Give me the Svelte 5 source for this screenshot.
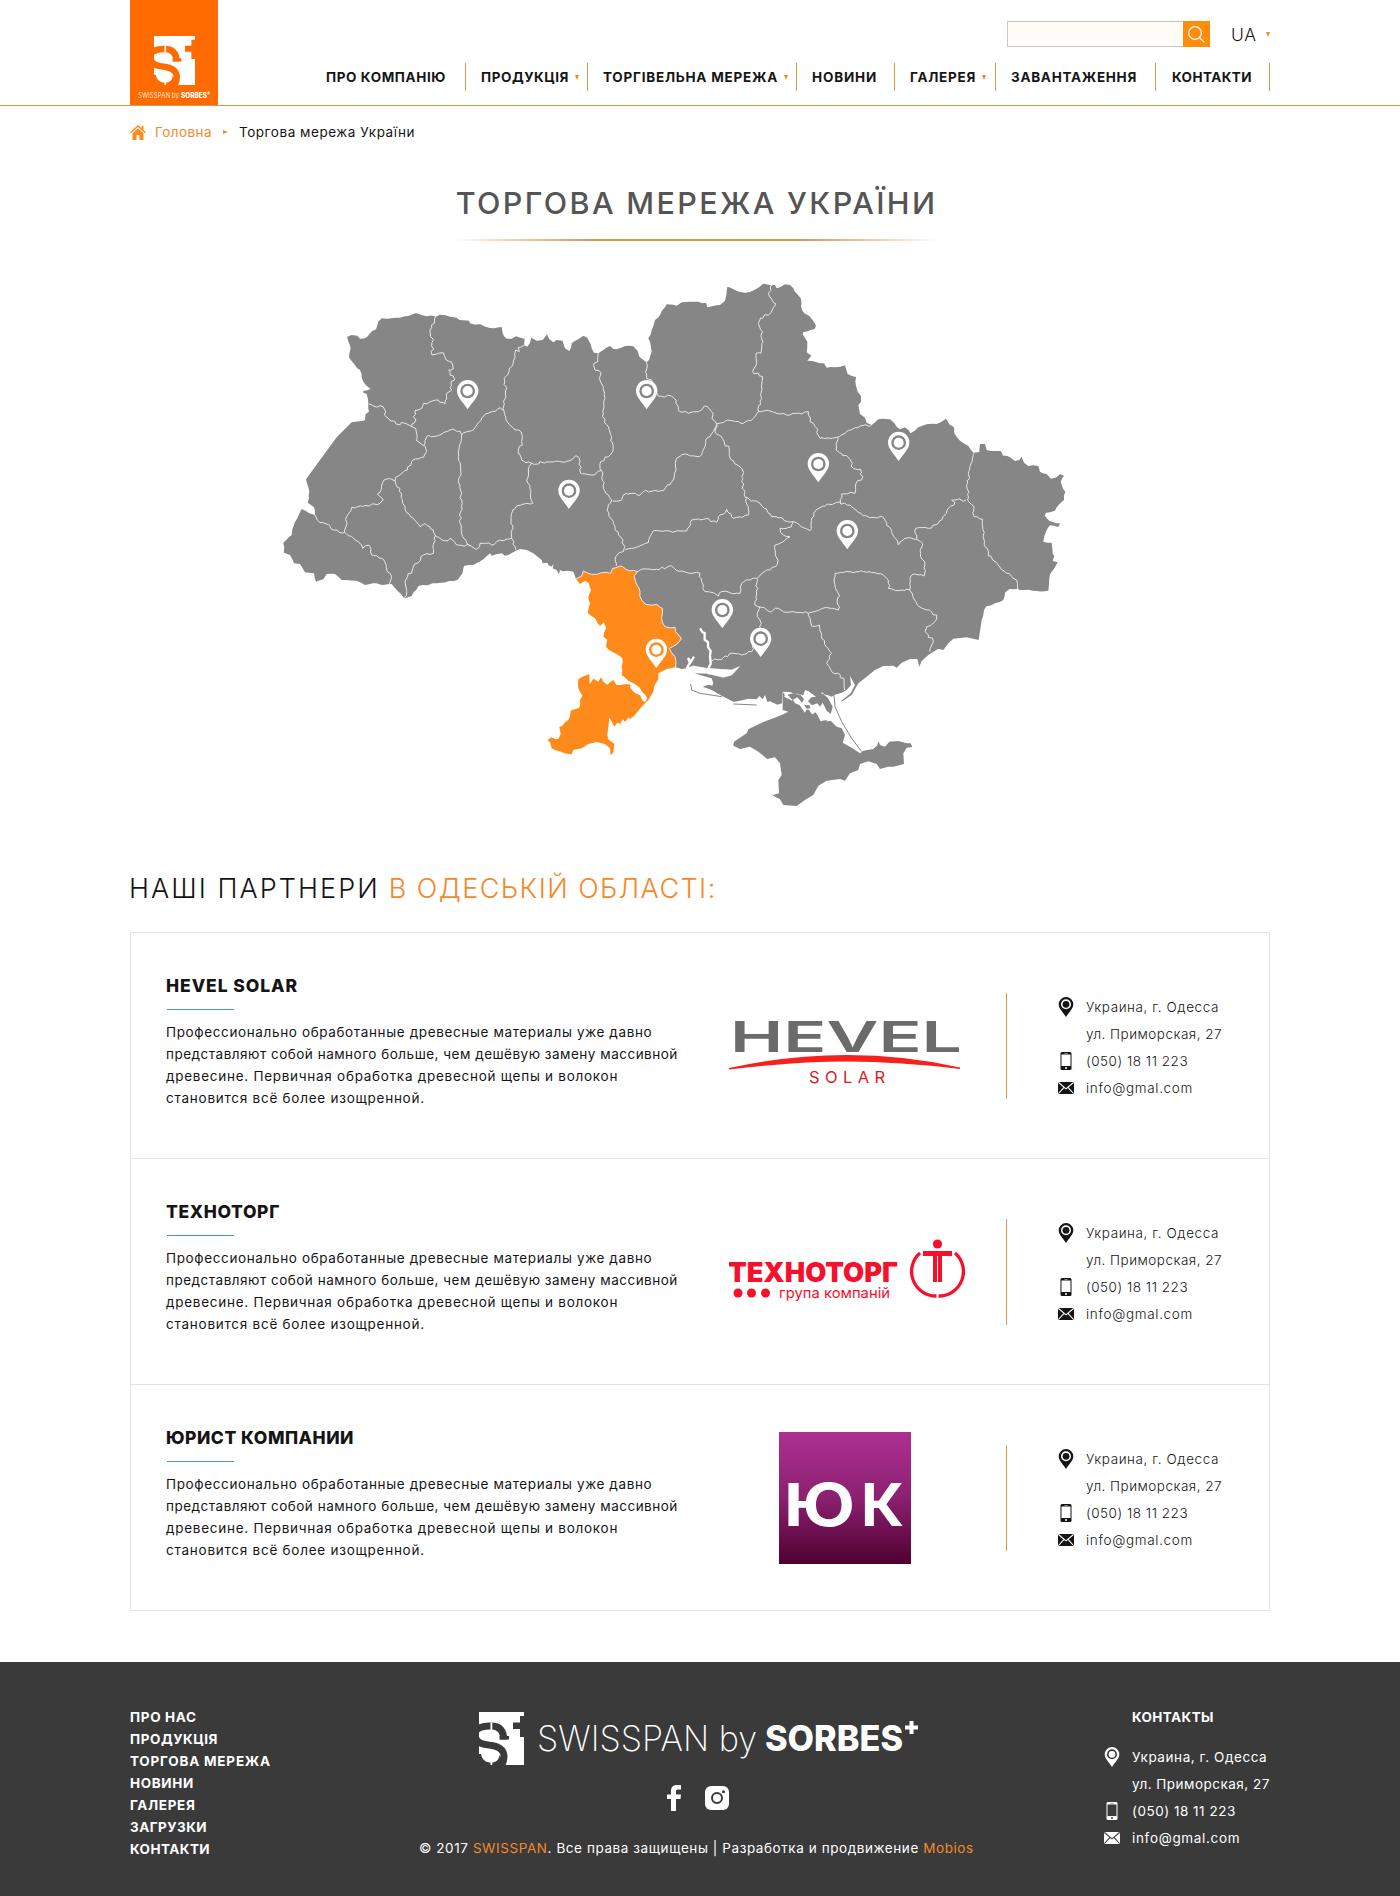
<script>
  // ---- map geometry -------------------------------------------------------
  const parse = (dx, dy, s) =>
    s.trim().split(/\s+/).map((p) => {
      const [x, y] = p.split(',').map(Number);
      return [x + dx, y + dy];
    });

  // Deterministic jitter gives coastlines and borders their natural raggedness.
  const noise = (x, y) => {
    const v = Math.sin(x * 12.9898 + y * 78.233) * 43758.5453;
    return (v - Math.floor(v)) * 2 - 1;
  };
  const rough = (pts, amp = 3.2, step = 13) => {
    const out = [];
    for (let i = 0; i < pts.length - 1; i++) {
      const [x1, y1] = pts[i];
      const [x2, y2] = pts[i + 1];
      const n = Math.max(1, Math.round(Math.hypot(x2 - x1, y2 - y1) / step));
      out.push([x1, y1]);
      for (let k = 1; k < n; k++) {
        const x = x1 + ((x2 - x1) * k) / n;
        const y = y1 + ((y2 - y1) * k) / n;
        out.push([x + noise(x, y) * amp, y + noise(y, x) * amp]);
      }
    }
    out.push(pts[pts.length - 1]);
    return out;
  };
  const draw = (pts, close) => 'M' + pts.map((p) => p[0].toFixed(1) + ' ' + p[1].toFixed(1)).join('L') + (close ? 'Z' : '');

  const west = (s) => parse(0, 0, s);
  const east = (s) => parse(1200, 0, s);
  const south = (s) => parse(750, 810, s);
  const coast = (s) => parse(1230, 870, s);

  const odesaBorder = rough(south('467,382 465,350 448,325 470,313 484,297 467,275 465,262 435,260 425,235 427,205 410,193 375,192 365,180 360,155 347,125 342,108 353,95 330,93 318,88 300,78 278,85 272,100 245,98 215,103 190,93 185,108 168,117'));

  const mainland = draw([
    ...rough([
      ...west('232,200 245,195 262,197 270,206 285,205 300,190 318,178 325,155 335,145 380,143 415,138 435,130 455,135 497,140 510,134 540,140 560,143 568,150 597,152 600,160 630,163 660,174 695,171 698,190 710,206 725,206 738,199 764,207 762,225 772,230 780,218 784,203 800,212 818,210 831,193 838,208 850,217 860,210 878,212 885,235 898,243 905,220 925,208 940,197 952,203 962,222 972,248 985,250 1000,240 1020,228 1030,237 1050,235 1065,228 1090,229 1103,243 1108,260 1130,277 1137,270 1145,245 1140,215 1135,205 1145,180 1155,150 1170,135 1185,112 1190,103'),
      ...east('10,104 20,107 35,97 60,95 108,98 112,112 150,105 165,92 172,50 190,58 215,67 240,66 265,53 280,41 315,45 320,55 345,43 360,45 375,65 392,85 393,110 403,130 428,150 438,168 433,178 400,187 398,193 412,215 410,247 424,257 412,272 440,277 462,280 470,293 495,292 525,286 533,312 558,321 556,335 563,365 573,378 573,395 565,405 570,432 585,443 590,458 605,465 625,448 660,448 680,470 690,478 705,472 715,480 722,490 745,472 770,463 800,462 828,446 838,463 852,472 853,490 870,512 895,528 910,548 928,546 930,522 945,522 950,540 975,543 992,543 1000,557 1020,562 1035,573 1048,570 1055,560 1062,578 1075,588 1105,588 1110,605 1130,612 1143,626 1160,622 1170,612 1182,617 1172,635 1186,665 1182,690 1160,712 1155,722 1128,728 1124,737 1138,753 1170,760 1165,771 1140,766 1128,785 1120,815 1145,818 1148,850 1153,858 1148,873 1163,877 1145,905 1138,925 1135,962 1100,963 1050,960 1043,957 1018,957 1005,968 1000,990 975,1000 950,1008 942,1020 935,1050')
    ], 2.2),
    ...coast('896,240 860,232 820,236 805,250 790,270 775,266 745,285 725,303 718,320 712,297 690,297 665,308 650,323 640,317 610,318 585,330 560,350 535,370 515,405 485,425 484,422 512,400 525,375 510,348 513,375 500,390 485,398 462,405 455,410 440,404 420,408 400,404 385,394 375,390 370,405 345,402 330,396 308,395 306,430 292,434 270,424 262,426 255,405 248,418 238,408 230,418 205,416 190,420 165,425'),
    ...south('640,485 605,467 575,450 548,440 580,430 575,415 540,405 515,395 500,385 485,387'),
    ...odesaBorder,
    ...south('160,95 145,92 128,94 120,90 117,103 110,90 98,85 101,72 95,80 85,75 82,68 68,70 65,60 50,48 40,40 20,30 0,27'),
    ...rough(west('738,842 715,855 705,857 695,850 665,857 660,850 640,868 610,885 582,888 578,908 562,930 500,940 445,948 425,978 402,985 365,942 340,945 320,940 285,945 258,932 215,930 195,912 170,912 160,928 138,935 132,910 105,907 90,882 72,880 60,855 42,848 40,818 65,795 70,770 82,745 95,717 118,730 135,735 132,712 113,698 118,665 108,628'), 2),
    ...west('150,570 200,502 245,457 280,452'),
    ...rough(west('285,450 287,432 297,425 295,400 290,372 280,368 280,362 302,357 280,335 270,300 255,285 237,262 242,235 232,200'), 2)
  ], true);

  const odesa = draw([
    ...odesaBorder,
    ...rough(south('180,132 195,122 207,130 213,150 205,170 210,190 203,218 225,235 240,258 252,247 258,265 250,290 262,300 258,320 285,340 307,355 305,405 325,422 350,436 366,455 382,474 376,486 368,482 360,466 344,458 330,442 332,434 325,433 290,435 280,420 262,434 250,425 243,412 235,425 220,416 210,432 208,403 175,418 175,445 187,467 180,480 178,503 152,512 145,540 118,562 122,582 115,597 95,592 82,600 90,607 95,625 130,638 155,643'), 2),
    ...south('160,630 185,625 205,612 230,606 255,612 270,625 272,645 280,638 283,612 265,598 262,585 268,535 276,548 280,568 340,530 365,500 385,480 400,455 403,437 415,418 415,400 440,387 467,382')
  ], true);

  const crimea = draw(coast('308,395 318,410 335,413 345,430 360,436 375,450 400,446 410,462 430,465 420,482 450,480 470,500 485,505 495,525 488,548 510,560 540,580 550,572 580,567 592,556 595,543 600,555 615,560 628,545 655,543 680,550 692,550 697,561 680,563 670,580 672,612 640,620 625,620 600,627 590,612 565,604 540,612 535,630 510,640 495,662 480,657 440,662 415,677 400,705 375,720 350,738 310,735 300,718 277,706 297,700 295,660 305,645 300,610 285,592 262,597 235,575 210,560 180,567 160,557 162,545 200,520 205,508 245,488 280,475 305,465 325,455 308,450'), true);
  // islets between the mainland and the peninsula
  const islets = [
    '322,404 338,420 352,412 366,428 372,418 362,406 340,400',
    '384,424 396,436 412,430 420,440 430,425 412,410 394,412',
    '400,404 428,428 440,452 452,462 458,440 444,414 430,402',
    '372,434 380,446 392,444 388,436'
  ].map((s) => draw(coast(s), true)).join('');

  const borders = [
    west('497,140 493,160 480,180 482,200 490,208 486,255 505,250 520,248 525,262 548,285 550,297 536,300 540,315 550,318 554,330 543,335 545,360 530,370 525,402 505,390 480,395 460,400 455,415 435,422 430,440 438,450 425,470'),
    west('297,402 315,410 330,407 345,420 343,435 378,462 405,460 425,470 437,475 438,510 462,528'),
    west('465,528 470,545 460,562 428,570 412,600 377,622 375,633'),
    west('375,633 365,628 342,630 335,655 322,672 340,690 330,700 245,712 230,740 224,787'),
    west('135,735 150,758 175,763 190,780 224,787 265,815 278,835 298,826 305,855 320,857 345,877 352,905 365,920 358,942'),
    west('375,633 390,655 398,700 410,728 430,745 450,770 465,760 490,780 497,798 520,812 540,805 555,818 560,825 600,827 620,838 630,820 650,820 665,825 680,815 725,805'),
    west('495,798 490,850 460,855 430,890 407,930 410,965 402,983'),
    west('462,528 470,500 505,497 540,480 570,483 575,495 610,480 640,440 690,413 700,422'),
    west('575,495 573,515 565,545 572,600 565,635 575,690 570,760 578,800 600,827'),
    west('764,225 745,232 748,245 737,240 735,262 725,290 702,325 708,360 700,395 702,422 708,450 735,480 753,485 757,525 745,540 755,570 785,580 850,576 900,572 918,557 930,575 932,610 965,615 995,602'),
    west('785,580 775,600 770,630 780,655 788,700 740,708 725,730 725,805 735,830 738,840'),
    west('985,250 983,275 972,280 975,300 993,310 988,325 1000,350 1005,385 997,440 1015,470 1025,500 1028,545 992,575 990,595 997,605 1000,655 1025,690 1012,722 1030,760 1045,795 1065,830 1060,845 1045,850 1035,870 1038,888'),
    west('1028,693 1045,693 1060,675 1085,670 1110,675 1120,665 1180,662 1210,630 1218,600 1220,565 1248,552 1288,560 1305,530 1310,505 1330,485 1340,462'),
    west('1065,840 1085,835 1135,818 1150,783 1230,783 1250,783 1265,750 1310,745 1340,757 1350,735 1370,718 1390,745 1435,735 1430,685'),
    west('1130,277 1130,325 1145,330 1165,378 1205,378 1218,390 1225,420 1255,430 1285,425 1303,408 1325,425 1330,450 1340,462'),
    east('140,462 185,452 220,460 250,445 265,425'),
    east('305,45 298,80 318,102 303,128 270,145 265,160 277,185 272,250 258,250 260,280 248,305 278,320 275,385 265,425'),
    east('265,425 285,422 350,435 380,430 395,432 415,425 420,455 433,465 450,505 500,502 530,485 570,468 605,465'),
    east('503,502 498,540 540,568 550,595 572,598 575,630 558,640 555,670 515,672 512,698'),
    east('140,462 135,485 155,500 178,540 182,568 218,600 215,635 228,685'),
    east('228,682 270,700 305,740 370,755 420,782 425,745 440,718 500,697 540,705 580,738 640,742 665,785 685,825 705,805 740,808'),
    east('370,755 365,770 330,775 332,788 360,800 315,825 322,883 290,900 262,925'),
    east('740,808 737,775 775,775 815,750 835,715 855,698 845,690 888,690'),
    east('912,550 900,590 893,640 893,690 912,710 912,740 938,748 945,830 968,870 1010,910 1040,930 1043,957'),
    east('740,808 758,820 752,850 765,885 762,918 725,915 720,960 685,962 655,955 655,930 640,915 600,905 540,905 495,910'),
    south('353,95 380,87 410,88 455,78 470,92 510,100 540,100 545,125 555,155 580,158 595,168 605,155 660,160 665,130 690,120 710,115'),
    coast('232,55 230,100 225,135 245,142 268,155 295,145 310,155 340,155 385,160 435,143 475,150 475,100 462,60 465,40'),
    coast('238,140 232,170 240,180 240,205 225,240 215,275 185,285 160,280 130,293 90,303'),
    coast('385,160 395,198 418,195 425,235 455,280 440,310 455,335 492,355 494,390'),
    coast('690,92 712,135 770,165 765,185 740,200 735,215 760,245 750,275')
  ].map((b) => draw(rough(b, 4, 9)));
  const odesaLine = draw(odesaBorder);

  const pins = [
    [593, 363], [1130, 363], [897, 662], [1886, 518], [1645, 582], [1732, 783],
    [1357, 1020], [1472, 1106], [1159, 1139, true]
  ];

  // ---- content ------------------------------------------------------------
  const nav = [
    ['ПРО КОМПАНІЮ'], ['ПРОДУКЦІЯ', true], ['ТОРГІВЕЛЬНА МЕРЕЖА', true], ['НОВИНИ'],
    ['ГАЛЕРЕЯ', true], ['ЗАВАНТАЖЕННЯ'], ['КОНТАКТИ']
  ];
  const text = [
    'Профессионально обработанные древесные материалы уже давно',
    'представляют собой намного больше, чем дешёвую замену массивной',
    'древесине. Первичная обработка древесной щепы и волокон',
    'становится всё более изощренной.'
  ];
  const partners = [
    { name: 'HEVEL SOLAR', logo: 'hevel' },
    { name: 'ТЕХНОТОРГ', logo: 'techno' },
    { name: 'ЮРИСТ КОМПАНИИ', logo: 'yuk' }
  ];
  const menu = ['ПРО НАС', 'ПРОДУКЦІЯ', 'ТОРГОВА МЕРЕЖА', 'НОВИНИ', 'ГАЛЕРЕЯ', 'ЗАГРУЗКИ', 'КОНТАКТИ'];
</script>

{#snippet mark()}
  <svg class="mark" viewBox="0 0 45 53" preserveAspectRatio="none">
    <path class="ink" d="M0 0H45V4H41V10.500H34V17H41V25H45V53H0Z" />
    <path class="band" d="M-2 17.500C3 13.500 7 14 12 14 20 14 24.500 18 24.800 27.500" />
    <path class="band" d="M-3 27C0 32.500 6 32.500 13 33.500 25 35.500 28 43 22 55" />
    <path class="gap" d="M20.500 24H30V27.500H20.500ZM0 42H2C3 48 7 50.500 12 50.500S20 48 20.500 43L26 53H0Z" />
    <path class="ink" d="M11.500 10.500h1.800v8h-1.800zM11.500 48h1.800v5h-1.800z" />
  </svg>
{/snippet}

{#snippet contacts()}
  <ul class="contacts">
    <li>
      <svg width="15" height="20" viewBox="0 0 15 20"><path class="ink" d="M7.500 0A7.300 7.300 0 0 0 .2 7.300C.2 11.500 4 14.500 7.500 20 11 14.500 14.800 11.500 14.800 7.300A7.300 7.300 0 0 0 7.500 0Z" /><circle class="gap" cx="7.500" cy="7.300" r="5" /><circle class="ink" cx="7.500" cy="7.300" r="3.400" /></svg>
      <span>Украина, г. Одесса</span>
    </li>
    <li><i></i><span>ул. Приморская, 27</span></li>
    <li>
      <svg width="15" height="18" viewBox="0 0 15 18"><rect class="ink" x="2" width="11" height="18" rx="1.500" /><path class="gap" d="M3 2.500h9v11.500h-9zM6 1h3v.6h-3z" /><circle class="gap" cx="7.500" cy="16" r="1" /></svg>
      <span>(050) 18 11 223</span>
    </li>
    <li>
      <svg width="16" height="12" viewBox="0 0 16 12"><rect class="ink" width="16" height="12" rx="1.500" /><path class="seam" d="M.5.5 8 6.800 15.500.5M.5 11.500 6 5.300M15.500 11.500 10 5.300" /></svg>
      <span>info@gmal.com</span>
    </li>
  </ul>
{/snippet}

<header>
  <div class="wrap head">
    <a class="brand" href="#top">
      {@render mark()}
      <svg class="brand-name" width="72" height="10" viewBox="0 0 72 10"><text x="0" y="7" textLength="41" lengthAdjust="spacingAndGlyphs">SWISSPAN by</text><text class="b" x="43" y="7" textLength="26" lengthAdjust="spacingAndGlyphs">SORBES</text><path class="ink" d="M70.200.5h1v1h1v1h-1v1h-1v-1h-1v-1h1z" /></svg>
    </a>
    <div class="right">
      <div class="tools">
        <div class="search"><input aria-label="search" /><button aria-label="find"><svg width="17" height="17" viewBox="0 0 17 17"><circle cx="7" cy="7" r="6.300" /><path d="M11.500 11.500l4.800 4.800" /></svg></button></div>
        <span class="lang">UA</span><b class="caret"></b>
      </div>
      <nav>
        {#each nav as [label, more]}
          <a href="#top"><span>{label}</span>{#if more}<b class="caret"></b>{/if}</a>
        {/each}
      </nav>
    </div>
  </div>
</header>

<main class="wrap">
  <div class="crumbs">
    <svg width="16" height="15" viewBox="0 0 16 15"><path d="M8 0 0 7.300l.9 1L8 2l7.100 6.300.9-1-2.500-2.300V1h-2v2.100ZM8 3.300 2.500 8.200V15H6.500V10h3v5h4V8.200Z" /></svg>
    <a href="#top">Головна</a>
    <b class="next"></b>
    <span>Торгова мережа України</span>
  </div>

  <h1>ТОРГОВА МЕРЕЖА УКРАЇНИ</h1>

  <svg class="map" viewBox="0 0 2430 1650">
    <path class="land" d={mainland} />
    <path class="land" d={crimea} />
    <path class="region" d={odesa} />
    {#each borders as d}<path class="border" {d} />{/each}
    <path class="border" d={odesaLine} />
    <g class="water">
      <path d="M1290 1075l8 12 6 2 0 20 10 8 0 14 8 12-2 14 2 24-6 12 2 20" />
      <path d="M1250 1196l10-18-6-14 8 12 10-16" />
      <path class="fill" d="M1250 1195l20-7 40 7 40 3 35 2 23-10-23 25-25 7-50-12-45-2-8 6Z" />
      <path d="M1292 1222l28 8-6 10 14 4" />
      <path class="fill" d="M1018 1345l10 18-2 18 16-10 4 8 16-14 12 4 12-20-8 4-2-10-10 14-8-8-8 14-8-4-8 12-8-8Z" />
      <path class="creek" d="M1545 1275l20 10 14-8 10 18 18-4 8-18 12 16 18-2 6 14 16-6-4-16 14 10-4 22-16 6 6 16-14-4M1592 1300l12 18 8-14 16 22 12-8 10 20 12-14M1640 1310l18 8 14-14 10 28-14 10 18 6M1650 1350l16-12 12 14" />
    </g>
    <path class="land" d={islets} />
    <path class="spit" d="M1692 1275l3 35 20 45 30 50 30 40M1262 1242l3 18 25 10 65 10M1390 1302l70 3" />
    {#each pins as [x, y, hot]}
      <g transform="translate({x} {y})">
        <path class="pin" d="M0-33A32 32 0 0 0-32 0C-32 18-14 34 0 55 14 34 32 18 32 0A32 32 0 0 0 0-33Z" />
        <circle class={hot ? 'region' : 'land'} r="22" /><circle class="pin" r="15" />
      </g>
    {/each}
  </svg>

  <h2><span>НАШІ ПАРТНЕРИ</span> <em>В ОДЕСЬКІЙ ОБЛАСТІ:</em></h2>

  <section class="partners">
    {#each partners as p}
      <article>
        <div class="about">
          <h3>{p.name}</h3>
          <p>{#each text as line}<span>{line}</span>{/each}</p>
        </div>
        <div class="logo {p.logo}-box">
          {#if p.logo === 'hevel'}
            <svg width="232" height="70" viewBox="0 0 232 70">
              <text class="hevel" x="1" y="32.500" textLength="232" lengthAdjust="spacingAndGlyphs">HEVEL</text>
              <path fill="#f5211d" d="M0 49Q60 36 118 36T231 48.500L231 50Q170 42.500 118 42.500T0 50.500Z" />
              <text class="solar" x="80" y="64" textLength="76">SOLAR</text>
            </svg>
          {:else if p.logo === 'techno'}
            <svg width="236" height="64" viewBox="0 0 236 64" fill="#f5102c">
              <text class="tt" x="-1" y="42.500" textLength="170" lengthAdjust="spacingAndGlyphs">ТЕХНОТОРГ</text>
              <circle cx="9" cy="54" r="4.500" /><circle cx="22.500" cy="54" r="4.500" /><circle cx="36.500" cy="54" r="4.500" />
              <text class="gk" x="50" y="58.500" textLength="111" lengthAdjust="spacingAndGlyphs">група компаній</text>
              <circle cx="208.500" cy="5" r="4.600" />
              <path d="M194 12h29v5h-10v26h-4V17h-1v26h-4V17h-10z" />
              <path fill="none" stroke="#f5102c" stroke-width="3.300" d="M191 14A24.500 24.500 0 0 0 207.500 57M226 14A24.500 24.500 0 0 1 209.500 57" />
            </svg>
          {:else}
            <div class="yuk"><svg width="132" height="132" viewBox="0 0 132 132"><text x="5" y="94" textLength="71" lengthAdjust="spacingAndGlyphs">Ю</text><text x="82" y="94" textLength="43" lengthAdjust="spacingAndGlyphs">К</text></svg></div>
          {/if}
        </div>
        {@render contacts()}
      </article>
    {/each}
  </section>
</main>

<footer>
  <div class="wrap foot">
    <ul class="menu">{#each menu as m}<li>{m}</li>{/each}</ul>
    <div class="mid">
      <div class="wordmark">
        {@render mark()}
        <svg width="380" height="50" viewBox="0 0 380 50" fill="#fff"><text class="light" x="-2" y="36" textLength="220" lengthAdjust="spacingAndGlyphs">SWISSPAN by</text><text class="heavy" x="226" y="36" textLength="138" lengthAdjust="spacingAndGlyphs">SORBES</text><path d="M370.500 6h4v4.500h4.500v4h-4.500v4.500h-4v-4.500h-4.500v-4h4.500z" /></svg>
      </div>
      <div class="social">
        <svg width="14" height="26" viewBox="0 0 14 26"><path class="ink" d="M14 0V4.500H11C9.500 4.500 9 5.200 9 6.500V9.500H14L13.500 14H9V26H4V14H0V9.500H4V6C4 2 6.300 0 10 0Z" /></svg>
        <svg width="24" height="24" viewBox="0 0 24 24"><rect class="ink" width="24" height="24" rx="6" /><circle cx="12" cy="12" r="5" fill="none" stroke="#3a3a3a" stroke-width="2" /><circle cx="18.500" cy="5.700" r="1.500" fill="#3a3a3a" /></svg>
      </div>
      <p class="copy">© 2017 <em>SWISSPAN</em>. Все права защищены | Разработка и продвижение <em>Mobios</em></p>
    </div>
    <div class="reach">
      <h4>КОНТАКТЫ</h4>
      {@render contacts()}
    </div>
  </div>
</footer>

<style>
  :global(body) { background: #fff; }
  :global(#app) { font-family: Inter, 'Open Sans', sans-serif; color: #151515; }
  ul, p, h1, h2, h3, h4 { margin: 0; padding: 0; list-style: none; }
  a { color: inherit; text-decoration: none; }
  em { font-style: normal; color: #f28a2c; }
  svg { display: block; flex: none; }
  .wrap { width: 1140px; margin: 0 auto; }

  header { height: 105px; border-bottom: 1px solid #d49a45; }
  .head { display: flex; justify-content: space-between; }
  .brand { width: 88px; height: 105px; box-sizing: border-box; padding-top: 36px; background: #ff6b00; --bg: #ff6b00; --ink: #fff; display: flex; flex-direction: column; align-items: center; }
  .brand .mark { width: 41px; height: 49px; }
  .brand-name { margin-top: 6px; fill: #ffe3cc; font-size: 7.5px; }
  .brand-name .b { font-weight: 800; fill: #fff; }
  .ink { fill: var(--ink); }
  .gap { fill: var(--bg); }
  .seam { fill: none; stroke: var(--bg); stroke-width: 1.1; }
  .band { fill: none; stroke: var(--bg); stroke-width: 7; }
  .mark { width: 45px; height: 53px; overflow: hidden; }
  .right { display: flex; flex-direction: column; align-items: flex-end; }
  .tools { display: flex; align-items: center; height: 26px; padding-top: 21px; }
  .search { display: flex; margin-right: 21px; }
  .search input { width: 176px; height: 26px; box-sizing: border-box; border: 1px solid #c9c7c4; border-right: 0; background: #fffcf8; padding: 0; }
  .search button { width: 27px; height: 26px; border: 0; padding: 0 0 0 5px; background: #ff8c0a; }
  .search svg { fill: none; stroke: #fff; stroke-width: 1.2; }
  .lang { font-size: 17.5px; font-weight: 300; letter-spacing: 0.85px; margin-right: 9px; }
  .caret { border: 2.5px solid transparent; border-top: 5px solid #f08a24; border-bottom: 0; }
  nav { display: grid; grid-template-columns: 140px 122px 209px 98px 101px 160px 114px; height: 28px; margin-top: 16px; }
  nav a { border-right: 1px solid #d49a45; padding-left: 15px; display: flex; align-items: center; gap: 6px; font-size: 13.5px; font-weight: 700; letter-spacing: 0.61px; white-space: nowrap; }
  nav a:nth-child(1) { padding-left: 0; }
  nav a:nth-child(2) { letter-spacing: 0.55px; }
  nav a:nth-child(3) { letter-spacing: 0.77px; }
  nav a:nth-child(4) { letter-spacing: 0.82px; }
  nav a:nth-child(5) { letter-spacing: 0.73px; }
  nav a:nth-child(6) { letter-spacing: 0.71px; }
  nav a:nth-child(7) { letter-spacing: 0.43px; padding-left: 16px; }

  .crumbs { display: flex; align-items: center; height: 18px; margin-top: 17px; font-size: 13.5px; letter-spacing: 0.54px; }
  .crumbs svg { fill: #ff8c1a; }
  .crumbs a { color: #f28a2c; letter-spacing: 0.44px; margin: 0 11px 0 9px; }
  .next { border: 2.5px solid transparent; border-left: 5px solid #f08a24; border-right: 0; margin-right: 11px; }
  h1 { width: 489px; margin: 39px auto 0 322px; height: 61px; text-align: center; font-size: 30.5px; line-height: 45px; letter-spacing: 2.35px; font-weight: 500; color: #555; background: linear-gradient(90deg, #fff0, #d9914a 30%, #d9914a 70%, #fff0) 0 100% / 100% 2px no-repeat; white-space: nowrap; }

  .map { width: 810px; height: 550px; margin: 29px 0 0 140px; }
  .land { fill: #868686; }
  .region { fill: #ff8a1c; }
  .border { fill: none; stroke: #e8e8e8; stroke-width: 3; }
  .pin { fill: #fff; }
  .water { fill: none; stroke: #fff; stroke-width: 7; }
  .water .fill { fill: #fff; stroke-width: 2; }
  .water .creek { stroke-width: 11; }
  .spit { fill: none; stroke: #868686; stroke-width: 3; }

  h2 { margin: 48px 0 0 -1px; height: 40px; line-height: 42px; font-size: 27px; font-weight: 300; letter-spacing: 1.44px; white-space: nowrap; }
  h2 span { letter-spacing: 2.05px; }
  .partners { margin-top: 24px; border: 1px solid #e4e4e4; }
  article { height: 225px; display: flex; border-top: 1px solid #e4e4e4; }
  article:first-child { border-top: 0; }
  .about { width: 562px; padding: 42px 0 0 35px; }
  h3 { font-size: 17.5px; line-height: 22px; font-weight: 800; letter-spacing: 0.94px; white-space: nowrap; }
  article:nth-child(2) h3 { letter-spacing: 0.63px; }
  article:nth-child(3) h3 { letter-spacing: 0.53px; }
  h3::after { content: ''; display: block; width: 67px; height: 1px; margin: 12px 0 0 1px; background: #45a58c; }
  .about p { margin-top: 11px; font-size: 13.5px; line-height: 22px; letter-spacing: 0.63px; }
  .about p span { display: table; white-space: nowrap; }
  .about p span:nth-child(2) { letter-spacing: 0.5px; }
  .about p span:nth-child(3) { letter-spacing: 0.73px; }
  .about p span:nth-child(4) { letter-spacing: 0.75px; }

  .logo { width: 278px; box-sizing: border-box; }
  .hevel-box { padding: 86px 0 0 1px; }
  .techno-box { padding: 80px 0 0 1px; }
  .yuk-box { padding: 47px 0 0 51px; }
  .hevel { font-size: 43px; font-weight: 600; fill: #6b6b6b; }
  .solar { font-size: 16.5px; fill: #d8201c; }
  .tt { font-size: 27.5px; font-weight: 900; }
  .gk { font-size: 14.5px; }
  .yuk { width: 132px; height: 132px; background: linear-gradient(#ad3092, #8b2070 50%, #4f0030); }
  .yuk text { fill: #fff; font-size: 59px; font-weight: 700; }

  .contacts { --ink: #151515; --bg: #fff; padding-left: 51px; border-left: 1px solid #d49a45; box-sizing: border-box; }
  article > .contacts { margin-top: 60px; height: 106px; }
  .contacts li { display: flex; align-items: center; height: 27px; font-size: 13.5px; font-weight: 300; letter-spacing: 0.57px; white-space: nowrap; }
  .contacts li:nth-child(2) { letter-spacing: 0.48px; }
  .contacts li:nth-child(3) { letter-spacing: 0.51px; }
  .contacts li:nth-child(4) { letter-spacing: 0.68px; }
  .contacts li > :first-child { width: 16px; margin-right: 12px; }

  footer { margin-top: 51px; height: 234px; background: #3a3a3a; color: #fff; --ink: #fff; --bg: #3a3a3a; }
  .foot { display: flex; padding-top: 44px; }
  .menu { width: 289px; font-size: 13.5px; font-weight: 700; line-height: 22px; letter-spacing: 0.65px; }
  .menu li:nth-child(2) { letter-spacing: 0.55px; }
  .menu li:nth-child(3) { letter-spacing: 0.78px; }
  .menu li:nth-child(n + 6) { letter-spacing: 0.44px; }
  .mid { width: 685px; padding-top: 6px; }
  .wordmark { display: flex; gap: 15px; padding-left: 60px; height: 53px; }
  .wordmark > svg:last-child { margin-top: 3px; }
  .light { font-size: 35px; font-weight: 200; }
  .heavy { font-size: 35px; font-weight: 800; }
  .social { display: flex; gap: 24px; align-items: center; padding-left: 248px; margin-top: 20px; }
  .copy { margin-top: 26px; font-size: 13.5px; line-height: 22px; letter-spacing: 0.58px; white-space: nowrap; }
  .reach { width: 166px; }
  h4 { padding-left: 28px; font-size: 13.5px; line-height: 22px; letter-spacing: 0.4px; }
  footer .contacts { --ink: #fff; --bg: #3a3a3a; border: 0; padding: 0; margin-top: 15px; }
  footer .contacts li { font-weight: 400; }
</style>
